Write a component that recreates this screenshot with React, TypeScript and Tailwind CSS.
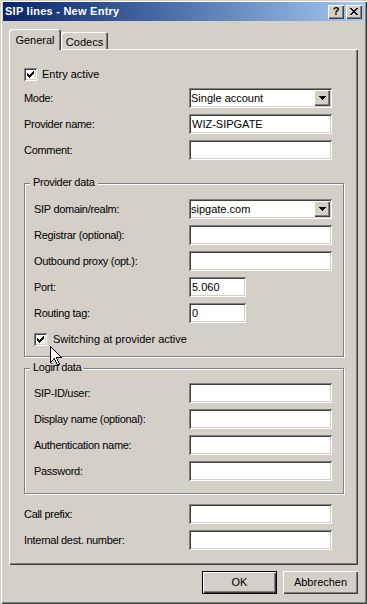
import { ReactNode } from "react"

const sunken =
  "bg-white shadow-[inset_1px_1px_0_#808080,inset_-1px_-1px_0_#fff,inset_2px_2px_0_#404040,inset_-2px_-2px_0_#d4d0c8]"
const raised =
  "bg-[#d4d0c8] shadow-[inset_1px_1px_0_#fff,inset_-1px_-1px_0_#404040,inset_-2px_-2px_0_#808080]"

const Check = () => (
  <svg width="7" height="7" viewBox="0 0 7 7" shapeRendering="crispEdges">
    <path
      d="M0 2h1v3h-1z M1 3h1v3h-1z M2 4h1v3h-1z M3 3h1v3h-1z M4 2h1v3h-1z M5 1h1v3h-1z M6 0h1v3h-1z"
      fill="#000"
    />
  </svg>
)

const Checkbox = ({ label, gap }: { label: string; gap: string }) => (
  <div className="flex items-center h-[13px]">
    <div className={`w-[13px] h-[13px] flex items-center justify-center ${sunken}`}>
      <Check />
    </div>
    <span className={gap}>{label}</span>
  </div>
)

const Field = ({ value = "", w = "w-[143px]" }: { value?: string; w?: string }) => (
  <div className={`${w} h-[20px] pl-[3px] leading-[20px] whitespace-nowrap ${sunken}`}>{value}</div>
)

const Combo = ({ value }: { value: string }) => (
  <div className={`relative w-[143px] h-[20px] pl-[2px] leading-[20px] ${sunken}`}>
    {value}
    <div className={`absolute right-[2px] top-[2px] w-[16px] h-[16px] flex items-center justify-center ${raised}`}>
      <svg width="7" height="4" viewBox="0 0 7 4" shapeRendering="crispEdges">
        <path d="M0 0h7v1h-7z M1 1h5v1h-5z M2 2h3v1h-3z M3 3h1v1h-1z" fill="#000" />
      </svg>
    </div>
  </div>
)

const Row = ({ label, labelW, mt, children }: { label: string; labelW: string; mt: string; children: ReactNode }) => (
  <div className={`flex items-center h-[20px] ${mt}`}>
    <div className={`${labelW} tracking-[-0.3px] whitespace-nowrap`}>{label}</div>
    {children}
  </div>
)

const Group = ({ title, pad, mt, children }: { title: string; pad: string; mt: string; children: ReactNode }) => (
  <div
    className={`relative w-[320px] border border-[#808080] shadow-[inset_1px_1px_0_#fff,1px_1px_0_#fff] pl-[9px] ${pad} ${mt}`}
  >
    <span className="absolute left-[5px] -top-[8px] h-[13px] leading-[13px] px-[3px] bg-[#d4d0c8] tracking-[-0.3px]">
      {title}
    </span>
    {children}
  </div>
)

export default function App() {
  return (
    <div className="relative w-[367px] h-[604px] overflow-hidden bg-[#d4d0c8] font-['Liberation_Sans',Arial,sans-serif] text-[11px] text-black shadow-[inset_1px_1px_0_#d4d0c8,inset_2px_2px_0_#fff,inset_-1px_-1px_0_#404040,inset_-2px_-2px_0_#808080] flex flex-col">
      {/* caption */}
      <div className="mt-[2px] mx-[3px] h-[19px] flex items-center bg-linear-to-r from-[#0a246a] to-[#a6caf0]">
        <span className="pl-[2px] font-bold text-white tracking-[0.25px]">SIP lines - New Entry</span>
        <div className="ml-auto mr-[2px] flex gap-[2px]">
          <div className={`w-[16px] h-[14px] flex items-center justify-center font-bold text-[11px] leading-none ${raised}`}>
            ?
          </div>
          <div className={`w-[16px] h-[14px] flex items-center justify-center ${raised}`}>
            <svg width="8" height="7" viewBox="0 0 8 7" shapeRendering="crispEdges">
              <path
                d="M0 0h2v1h-2z M6 0h2v1h-2z M1 1h2v1h-2z M5 1h2v1h-2z M2 2h4v1h-4z M3 3h2v1h-2z M2 4h4v1h-4z M1 5h2v1h-2z M5 5h2v1h-2z M0 6h2v1h-2z M6 6h2v1h-2z"
                fill="#000"
              />
            </svg>
          </div>
        </div>
      </div>

      {/* tabs */}
      <div className="mt-[8px] ml-[9px] h-[20px] flex items-end">
        <div className="relative z-10 w-[52px] h-[21px] -mb-px rounded-t-[3px] bg-[#d4d0c8] shadow-[inset_1px_1px_0_#fff,inset_-1px_0_0_#404040,inset_-2px_0_0_#808080] flex justify-center pt-[3px]">
          General
        </div>
        <div className="w-[47px] h-[17px] rounded-t-[3px] shadow-[inset_1px_1px_0_#fff,inset_-1px_0_0_#404040,inset_-2px_0_0_#808080] flex justify-center pt-[2px]">
          Codecs
        </div>
      </div>

      {/* panel */}
      <div className="ml-[9px] w-[349px] h-[516px] shadow-[inset_1px_1px_0_#fff,inset_-1px_-1px_0_#404040,inset_-2px_-2px_0_#808080] flex flex-col pl-[15px] pt-[19px]">
        <Checkbox label="Entry active" gap="ml-[5px]" />
        <Row label="Mode:" labelW="w-[165px]" mt="mt-[7px]">
          <Combo value="Single account" />
        </Row>
        <Row label="Provider name:" labelW="w-[165px]" mt="mt-[6px]">
          <Field value="WIZ-SIPGATE" />
        </Row>
        <Row label="Comment:" labelW="w-[165px]" mt="mt-[6px]">
          <Field />
        </Row>

        <Group title="Provider data" pad="pt-[15px] pb-[10px]" mt="mt-[23px]">
          <Row label="SIP domain/realm:" labelW="w-[155px]" mt="mt-0">
            <Combo value="sipgate.com" />
          </Row>
          <Row label="Registrar (optional):" labelW="w-[155px]" mt="mt-[6px]">
            <Field />
          </Row>
          <Row label="Outbound proxy (opt.):" labelW="w-[155px]" mt="mt-[6px]">
            <Field />
          </Row>
          <Row label="Port:" labelW="w-[155px]" mt="mt-[6px]">
            <Field value="5.060" w="w-[57px]" />
          </Row>
          <Row label="Routing tag:" labelW="w-[155px]" mt="mt-[6px]">
            <Field value="0" w="w-[57px]" />
          </Row>
          <div className="mt-[10px]">
            <Checkbox label="Switching at provider active" gap="ml-[6px]" />
          </div>
        </Group>

        <Group title="Login data" pad="pt-[14px] pb-[12px]" mt="mt-[11px]">
          <Row label="SIP-ID/user:" labelW="w-[155px]" mt="mt-0">
            <Field />
          </Row>
          <Row label="Display name (optional):" labelW="w-[155px]" mt="mt-[6px]">
            <Field />
          </Row>
          <Row label="Authentication name:" labelW="w-[155px]" mt="mt-[6px]">
            <Field />
          </Row>
          <Row label="Password:" labelW="w-[155px]" mt="mt-[6px]">
            <Field />
          </Row>
        </Group>

        <Row label="Call prefix:" labelW="w-[165px]" mt="mt-[10px]">
          <Field />
        </Row>
        <Row label="Internal dest. number:" labelW="w-[165px]" mt="mt-[6px]">
          <Field />
        </Row>
      </div>

      {/* buttons */}
      <div className="mt-[6px] pr-[9px] flex justify-end gap-[6px]">
        <div className="w-[75px] h-[23px] border border-black">
          <div className={`w-full h-full flex items-center justify-center ${raised}`}>OK</div>
        </div>
        <div className={`w-[75px] h-[23px] flex items-center justify-center ${raised}`}>Abbrechen</div>
      </div>

      {/* mouse pointer */}
      <svg
        className="absolute left-[50px] top-[346px]"
        width="13"
        height="21"
        viewBox="0 0 13 21"
        shapeRendering="crispEdges"
      >
        <path d="M0.5 0.5 L0.5 16.5 L4.5 12.5 L7.5 19.5 L9.5 18.5 L6.5 11.5 L11.5 11.5 Z" fill="#fff" stroke="#000" />
      </svg>
    </div>
  )
}
